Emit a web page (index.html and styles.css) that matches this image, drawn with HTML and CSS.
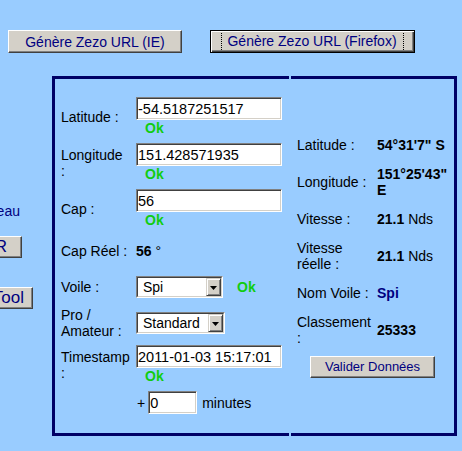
FILE: index.html
```html
<!DOCTYPE html>
<html lang="fr">
<head>
<meta charset="utf-8">
<title>Zezo</title>
<link rel="stylesheet" href="styles.css">
</head>
<body>
<div class="page">
  <div class="topbar">
    <button class="btn btn-top btn-ie">Génère Zezo URL (IE)</button>
    <button class="btn btn-top btn-ff btn-default"><span class="focus">Génère Zezo URL (Firefox)</span></button>
  </div>
  <div class="main">
    <div class="side">
      <div class="side-text">Bateau</div>
      <button class="btn side-btn side-btn-r">VALIDER</button>
      <button class="btn side-btn side-btn-tool">Zezo Tool</button>
    </div>
    <div class="panel">
      <div class="box box-left">
        <div class="form">
          <div class="frow">
            <div class="lbl">Latitude :</div>
            <div class="val val-stack"><input class="field field-wide" type="text" value="-54.5187251517"><span class="ok">Ok</span></div>
          </div>
          <div class="frow">
            <div class="lbl">Longitude :</div>
            <div class="val val-stack"><input class="field field-wide" type="text" value="151.428571935"><span class="ok">Ok</span></div>
          </div>
          <div class="frow">
            <div class="lbl">Cap :</div>
            <div class="val val-stack"><input class="field field-wide" type="text" value="56"><span class="ok">Ok</span></div>
          </div>
          <div class="frow frow-cap">
            <div class="lbl">Cap Réel :</div>
            <div class="val"><b>56</b> °</div>
          </div>
          <div class="frow frow-voile">
            <div class="lbl">Voile :</div>
            <div class="val val-line">
              <div class="combo combo-voile"><div class="combo-inner"><span class="combo-value">Spi</span><span class="combo-btn"><svg width="7" height="4" viewBox="0 0 7 4"><path d="M0 0h7L3.5 4z" fill="#000"/></svg></span></div></div>
              <span class="ok ok-inline">Ok</span>
            </div>
          </div>
          <div class="frow">
            <div class="lbl">Pro / Amateur :</div>
            <div class="val">
              <div class="combo combo-pro"><div class="combo-inner"><span class="combo-value">Standard</span><span class="combo-btn"><svg width="7" height="4" viewBox="0 0 7 4"><path d="M0 0h7L3.5 4z" fill="#000"/></svg></span></div></div>
            </div>
          </div>
          <div class="frow">
            <div class="lbl">Timestamp :</div>
            <div class="val val-stack"><input class="field field-wide" type="text" value="2011-01-03 15:17:01"><span class="ok">Ok</span></div>
          </div>
          <div class="frow">
            <div class="lbl"></div>
            <div class="val val-minutes"><span class="plus">+</span><input class="field field-min" type="text" value="0"><span class="unit">minutes</span></div>
          </div>
        </div>
      </div>
      <div class="box box-right">
        <div class="info">
          <div class="irow">
            <div class="lbl">Latitude :</div>
            <div class="ival"><b>54°31'7" S</b></div>
          </div>
          <div class="irow">
            <div class="lbl">Longitude :</div>
            <div class="ival"><b>151°25'43" E</b></div>
          </div>
          <div class="irow">
            <div class="lbl">Vitesse :</div>
            <div class="ival"><b>21.1</b> Nds</div>
          </div>
          <div class="irow">
            <div class="lbl">Vitesse réelle :</div>
            <div class="ival"><b>21.1</b> Nds</div>
          </div>
          <div class="irow">
            <div class="lbl">Nom Voile :</div>
            <div class="ival"><b class="navy">Spi</b></div>
          </div>
          <div class="irow">
            <div class="lbl">Classement :</div>
            <div class="ival"><b>25333</b></div>
          </div>
          <div class="irow-btn">
            <button class="btn btn-valid">Valider Données</button>
          </div>
        </div>
      </div>
    </div>
  </div>
</div>
</body>
</html>
```
FILE: styles.css
```css
html, body {
  margin: 0;
  padding: 0;
}
body {
  background: #99ccff;
  font-family: "Liberation Sans", Arial, sans-serif;
  font-size: 14px;
  line-height: 16px;
  color: #000;
  overflow: hidden;
}
.page {
  width: 462px;
  height: 451px;
}
.btn {
  box-sizing: border-box;
  margin: 0;
  padding: 0;
  background: #d4d0c8;
  color: #000080;
  font-family: "Liberation Sans", Arial, sans-serif;
  font-size: 14px;
  line-height: 16px;
  border: 1px solid;
  border-color: #ffffff #404040 #404040 #ffffff;
  box-shadow: inset -1px -1px 0 #808080;
  border-radius: 0;
  cursor: default;
}
.topbar {
  display: flex;
  gap: 28px;
  padding: 30px 0 0 8px;
}
.btn-top {
  height: 23px;
  display: flex;
  align-items: center;
  justify-content: center;
}
.btn-ie {
  width: 174px;
}
.btn-ff {
  width: 205px;
}
.btn-default {
  border: 1px solid #000;
  box-shadow: inset 1px 1px 0 #ffffff, inset -1px -1px 0 #404040, inset -2px -2px 0 #808080;
}
.focus {
  box-sizing: border-box;
  width: 183px;
  line-height: 17px;
  border-left: 1px dotted #000;
  border-right: 1px dotted #000;
  text-align: center;
  margin-left: -1px;
}
.main {
  display: flex;
  margin-top: 23px;
}
.side {
  flex: none;
  width: 52px;
  display: flex;
  flex-direction: column;
  align-items: flex-start;
}
.side-text {
  margin-top: 127px;
  margin-left: -24.4px;
  color: #000080;
  white-space: nowrap;
  line-height: 16px;
}
.side-btn {
  height: 22px;
  flex: none;
  white-space: nowrap;
  text-align: right;
  font-size: 17px;
  line-height: 20px;
  width: 100px;
}
.side-btn-r {
  margin-left: -78px;
  margin-top: 17px;
  padding-right: 14px;
}
.side-btn-tool {
  margin-left: -67px;
  margin-top: 29px;
  padding-right: 8px;
}
.panel {
  display: flex;
  gap: 2px;
}
.box {
  box-sizing: border-box;
  height: 360px;
  border: 3px solid #000066;
}
.box-left {
  width: 237px;
  border-right: none;
  padding: 18px 0 0 6px;
}
.box-right {
  width: 166px;
  border-left: none;
  padding-top: 58px;
}
.form {
  display: flex;
  flex-direction: column;
  gap: 6px;
}
.frow {
  display: grid;
  grid-template-columns: 68px auto;
  column-gap: 7px;
  align-items: center;
}
.frow-cap {
  min-height: 32px;
}
.frow-voile {
  min-height: 28px;
}
.lbl {
  line-height: 16px;
}
.val-stack {
  display: flex;
  flex-direction: column;
  align-items: flex-start;
}
.field {
  box-sizing: border-box;
  height: 23px;
  margin: 0;
  padding: 0 0 0 1px;
  border: 1px solid;
  border-color: #808080 #ffffff #ffffff #808080;
  box-shadow: inset 1px 1px 0 #404040, inset -1px -1px 0 #d4d0c8;
  background: #fff;
  color: #000;
  font-family: "Liberation Sans", Arial, sans-serif;
  font-size: 14.5px;
  border-radius: 0;
  outline: none;
}
.field-wide {
  width: 146px;
}
.field-min {
  width: 49px;
}
.ok {
  color: #11cc11;
  font-weight: bold;
  line-height: 17px;
  padding-left: 9px;
}
.val-line {
  display: flex;
  align-items: center;
}
.ok-inline {
  padding-left: 14px;
}
.combo {
  box-sizing: border-box;
  height: 22px;
  border: 1px solid;
  border-color: #808080 #ffffff #ffffff #808080;
  background: #fff;
}
.combo-voile {
  width: 87px;
}
.combo-pro {
  width: 89px;
}
.combo-inner {
  box-sizing: border-box;
  height: 100%;
  border: 1px solid;
  border-color: #404040 #d4d0c8 #d4d0c8 #404040;
  display: flex;
}
.combo-value {
  flex: 1;
  padding-left: 5px;
  line-height: 18px;
  white-space: nowrap;
  overflow: hidden;
}
.combo-btn {
  box-sizing: border-box;
  width: 15px;
  flex: none;
  background: #d4d0c8;
  border: 1px solid;
  border-color: #d4d0c8 #404040 #404040 #d4d0c8;
  box-shadow: inset 1px 1px 0 #ffffff, inset -1px -1px 0 #808080;
  display: flex;
  align-items: center;
  justify-content: center;
}
.combo-btn svg {
  display: block;
  margin-top: 1px;
}
.val-minutes {
  display: flex;
  align-items: center;
}
.plus {
  padding-left: 1px;
  margin-right: 3px;
}
.unit {
  margin-left: 5px;
}
.info {
  display: flex;
  flex-direction: column;
  gap: 13px;
}
.irow {
  display: grid;
  grid-template-columns: 74px 76px;
  column-gap: 6px;
  align-items: center;
  padding-left: 6px;
}
.ival {
  line-height: 16px;
}
.navy {
  color: #000080;
}
.irow-btn {
  display: flex;
  justify-content: center;
  margin-top: -3px;
}
.btn-valid {
  width: 125px;
  height: 22px;
  font-size: 13px;
  text-align: center;
}
```
